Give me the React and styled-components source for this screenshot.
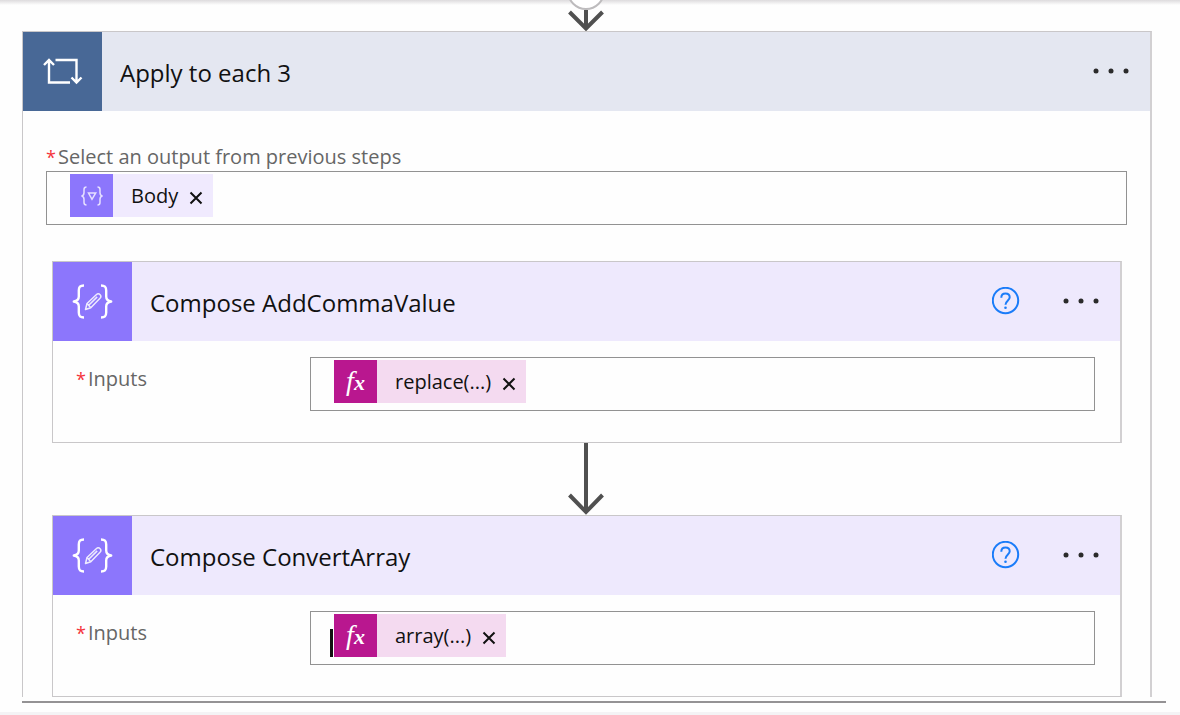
import React, { useState } from "react";
import styled, { createGlobalStyle } from "styled-components";

const GlobalStyle = createGlobalStyle`
  * {
    box-sizing: border-box;
  }
  body {
    margin: 0;
    background: #fefefe;
    font-family: "Open Sans", "Noto Sans", sans-serif;
    color: #111;
  }
`;

function LoopIcon() {
  return (
    <svg width="42" height="30" viewBox="0 0 42 30" fill="none" stroke="#fff" strokeWidth="2.4" aria-hidden="true">
      <path d="M13.5 3H34.5V25M29.500 20.500l5 5 5-5" />
      <path d="M28 25.500H7V3M2 8l5-5 5 5" />
    </svg>
  );
}

function ComposeIcon() {
  return (
    <svg width="42" height="36" viewBox="0 0 42 36" fill="none" stroke="#fff" strokeLinejoin="round" aria-hidden="true">
      <g strokeWidth="2.4">
        <path d="M12 1.500C8 1.500 6.800 3 6.800 6.500v6c0 3-1.500 4.500-5 5 3.500.5 5 2.500 5 5v6c0 3.500 1.200 5 5.200 5" />
        <path d="M29 1.500c4 0 5.200 1.500 5.200 5v6c0 3 1.500 4.500 5 5-3.500.5-5 2.500-5 5v6c0 3.500-1.200 5-5.200 5" />
      </g>
      <g strokeWidth="1.5" opacity="0.85">
        <path d="M13.500 25.500l1.500-6L24.500 10.500c1.200-1 2.600-.8 3.600.3s1 2.400-.1 3.500L18.800 23.700z" />
        <path d="M15 19.500l3.800 4.200M16.500 21.500l8.700-8.600" />
      </g>
    </svg>
  );
}

function VariableIcon() {
  return (
    <svg width="24" height="20" viewBox="0 0 24 20" fill="none" stroke="#e6e0ff" strokeWidth="1.5" aria-hidden="true">
      <path d="M6.500 1C4.500 1 4 2 4 3.500v3.200C4 8.500 3.200 9.700 1.500 10c1.700.3 2.500 1.500 2.500 3.300v3.200C4 18 4.500 19 6.500 19" />
      <path d="M17.500 1c2 0 2.500 1 2.500 2.500v3.200c0 1.800.8 3 2.500 3.300-1.700.3-2.500 1.500-2.500 3.300v3.200c0 1.500-.5 2.500-2.500 2.500" />
      <path d="M8.500 7h7.200L12 13.300z" />
    </svg>
  );
}

function HelpIcon() {
  return (
    <svg width="28" height="28" viewBox="0 0 28 28" fill="none" stroke="#1a7cf9" strokeWidth="2" aria-hidden="true">
      <circle cx="13.500" cy="13.500" r="12.700" />
      <path d="M9.300 10.700c0-2.600 1.700-4.200 4.200-4.200s4.200 1.500 4.200 3.800c0 3.300-4.200 3.700-4.200 7.400" />
      <circle cx="13.500" cy="20.800" r="1.300" fill="#1a7cf9" stroke="none" />
    </svg>
  );
}

function MoreIcon() {
  return (
    <svg width="38" height="8" viewBox="0 0 38 8" fill="#2b2b2b" aria-hidden="true">
      <circle cx="4" cy="4" r="2.500" />
      <circle cx="19" cy="4" r="2.500" />
      <circle cx="34" cy="4" r="2.500" />
    </svg>
  );
}

function CloseIcon() {
  return (
    <svg width="14" height="14" viewBox="0 0 14 14" stroke="#111" strokeWidth="2" aria-hidden="true">
      <path d="M1.500 1.500l11 11M12.500 1.500l-11 11" />
    </svg>
  );
}

function Token({ kind, text, onRemove }) {
  return (
    <TokenBox $kind={kind}>
      <TokenIcon $kind={kind}>{kind === "fx" ? <Fx><span>f</span><small>x</small></Fx> : <VariableIcon />}</TokenIcon>
      <TokenText>{text}</TokenText>
      <IconButton aria-label={`Remove ${text}`} onClick={onRemove}>
        <CloseIcon />
      </IconButton>
    </TokenBox>
  );
}

function TokenField({ id, kind, text, caret }) {
  const [shown, setShown] = useState(true);
  return (
    <Field>
      <Lead>{caret && <Caret />}</Lead>
      {shown && <Token kind={kind} text={text} onRemove={() => setShown(false)} />}
      <FieldInput id={id} type="text" />
    </Field>
  );
}

function ComposeCard({ id, title, text, caret }) {
  return (
    <Card>
      <Header $tint="#eee9fd">
        <HeaderIcon $color="#8c76fc">
          <ComposeIcon />
        </HeaderIcon>
        <Title>{title}</Title>
        <Actions>
          <IconButton aria-label="Help">
            <HelpIcon />
          </IconButton>
          <IconButton aria-label="More commands">
            <MoreIcon />
          </IconButton>
        </Actions>
      </Header>
      <InputRow>
        <Label htmlFor={id}>
          <Required>*</Required>Inputs
        </Label>
        <TokenField id={id} kind="fx" text={text} caret={caret} />
      </InputRow>
    </Card>
  );
}

function App() {
  return (
    <>
      <GlobalStyle />
      <Canvas>
        <TopConnector>
          <svg width="40" height="31" viewBox="0 0 40 31" fill="none" aria-hidden="true">
            <circle cx="19" cy="-9" r="18" fill="#fff" stroke="#bdbbbd" strokeWidth="2" />
            <path d="M19 10v18M2.500 12L19 28.500l16.500-16.500" stroke="#505050" strokeWidth="4" />
          </svg>
        </TopConnector>
        <Scope>
          <Header $tint="#e4e7f1">
            <HeaderIcon $color="#486896">
              <LoopIcon />
            </HeaderIcon>
            <Title>Apply to each 3</Title>
            <Actions>
              <IconButton aria-label="More commands">
                <MoreIcon />
              </IconButton>
            </Actions>
          </Header>
          <Source>
            <Label htmlFor="source">
              <Required>*</Required>Select an output from previous steps
            </Label>
            <TokenField id="source" kind="variable" text="Body" />
          </Source>
          <Steps>
            <ComposeCard id="comma" title="Compose AddCommaValue" text="replace(...)" />
            <Connector>
              <svg width="40" height="72" viewBox="0 0 40 72" fill="none" aria-hidden="true">
                <path d="M19 0v69M2.500 52L19 69l16.500-17" stroke="#505050" strokeWidth="4" />
              </svg>
            </Connector>
            <ComposeCard id="array" title="Compose ConvertArray" text="array(...)" caret />
          </Steps>
        </Scope>
        <BottomRule />
      </Canvas>
      <Footer />
    </>
  );
}

const Canvas = styled.main`
  padding: 0 28px 9px 22px;
  background: linear-gradient(#dddbdd, #fefefe 5px);
`;

const TopConnector = styled.div`
  height: 31px;
  display: flex;
  justify-content: center;
  overflow: hidden;
`;

const Connector = styled.div`
  height: 72px;
  display: flex;
  justify-content: center;
`;

const Scope = styled.section`
  border: 1px solid #c9c7c9;
  border-right: 2px solid #d2d0d2;
  border-bottom: none;
`;

const Card = styled.section`
  border: 1px solid #c9c7c9;
  border-right: 2px solid #d2d0d2;
  background: #fefefe;
`;

const Header = styled.header`
  display: flex;
  align-items: center;
  height: 79px;
  background: ${(props) => props.$tint};
`;

const HeaderIcon = styled.div`
  width: 79px;
  height: 79px;
  display: flex;
  align-items: center;
  justify-content: center;
  background: ${(props) => props.$color};
`;

const Title = styled.h2`
  flex: 1;
  margin: 0;
  padding: 2px 0 0 18px;
  font-size: 24px;
  font-weight: 400;
  line-height: 32px;
`;

const Actions = styled.div`
  display: flex;
  align-items: center;
  gap: 42px;
  padding: 0 20px 2px 0;
`;

const IconButton = styled.button`
  display: flex;
  padding: 0;
  border: none;
  background: none;
  cursor: pointer;
`;

const Source = styled.div`
  display: flex;
  flex-direction: column;
  padding: 32px 23px 0;
`;

const Steps = styled.div`
  padding: 36px 28px 0 29px;
`;

const InputRow = styled.div`
  display: grid;
  grid-template-columns: 234px 1fr;
  padding: 16px 25px 31px 23px;
`;

const Label = styled.label`
  display: flex;
  height: 28px;
  font-size: 20px;
  line-height: 28px;
  color: #666;
  ${InputRow} & {
    margin-top: 8px;
  }
`;

const Required = styled.span`
  width: 12px;
  font-size: 18px;
  color: #f5333a;
`;

const Field = styled.div`
  display: flex;
  align-items: flex-start;
  height: 54px;
  padding-top: 2px;
  border: 1px solid #929292;
  background: #fefefe;
`;

const Lead = styled.span`
  flex: none;
  width: 23px;
  height: 43px;
  padding-right: 1px;
  display: flex;
  justify-content: flex-end;
  align-items: flex-end;
`;

const Caret = styled.span`
  width: 3px;
  height: 28px;
  background: #111;
`;

const FieldInput = styled.input`
  flex: 1;
  min-width: 0;
  height: 43px;
  border: none;
  outline: none;
  background: none;
  font: inherit;
  font-size: 20px;
`;

const TokenBox = styled.span`
  display: flex;
  align-items: center;
  height: 43px;
  padding-right: 10px;
  background: ${(props) => (props.$kind === "fx" ? "#f4daf0" : "#f0eafe")};
  ${IconButton} {
    padding-top: 4px;
  }
`;

const TokenIcon = styled.span`
  width: 43px;
  height: 43px;
  display: flex;
  align-items: center;
  justify-content: center;
  background: ${(props) => (props.$kind === "fx" ? "#b9178f" : "#8c76fc")};
`;

const Fx = styled.span`
  display: flex;
  align-items: baseline;
  color: #fff;
  font-family: "Liberation Serif", serif;
  font-size: 28px;
  font-style: italic;
  font-weight: 400;
  line-height: 28px;
  small {
    font-size: 22px;
    font-weight: 700;
  }
`;

const TokenText = styled.span`
  padding: 0 11px 0 18px;
  font-size: 20px;
  line-height: 28px;
`;

const BottomRule = styled.hr`
  height: 2px;
  margin: 4px -14px 0 0;
  border: none;
  background: #949294;
`;

const Footer = styled.footer`
  height: 4px;
  background: #f4f3f5;
`;

export default App;
